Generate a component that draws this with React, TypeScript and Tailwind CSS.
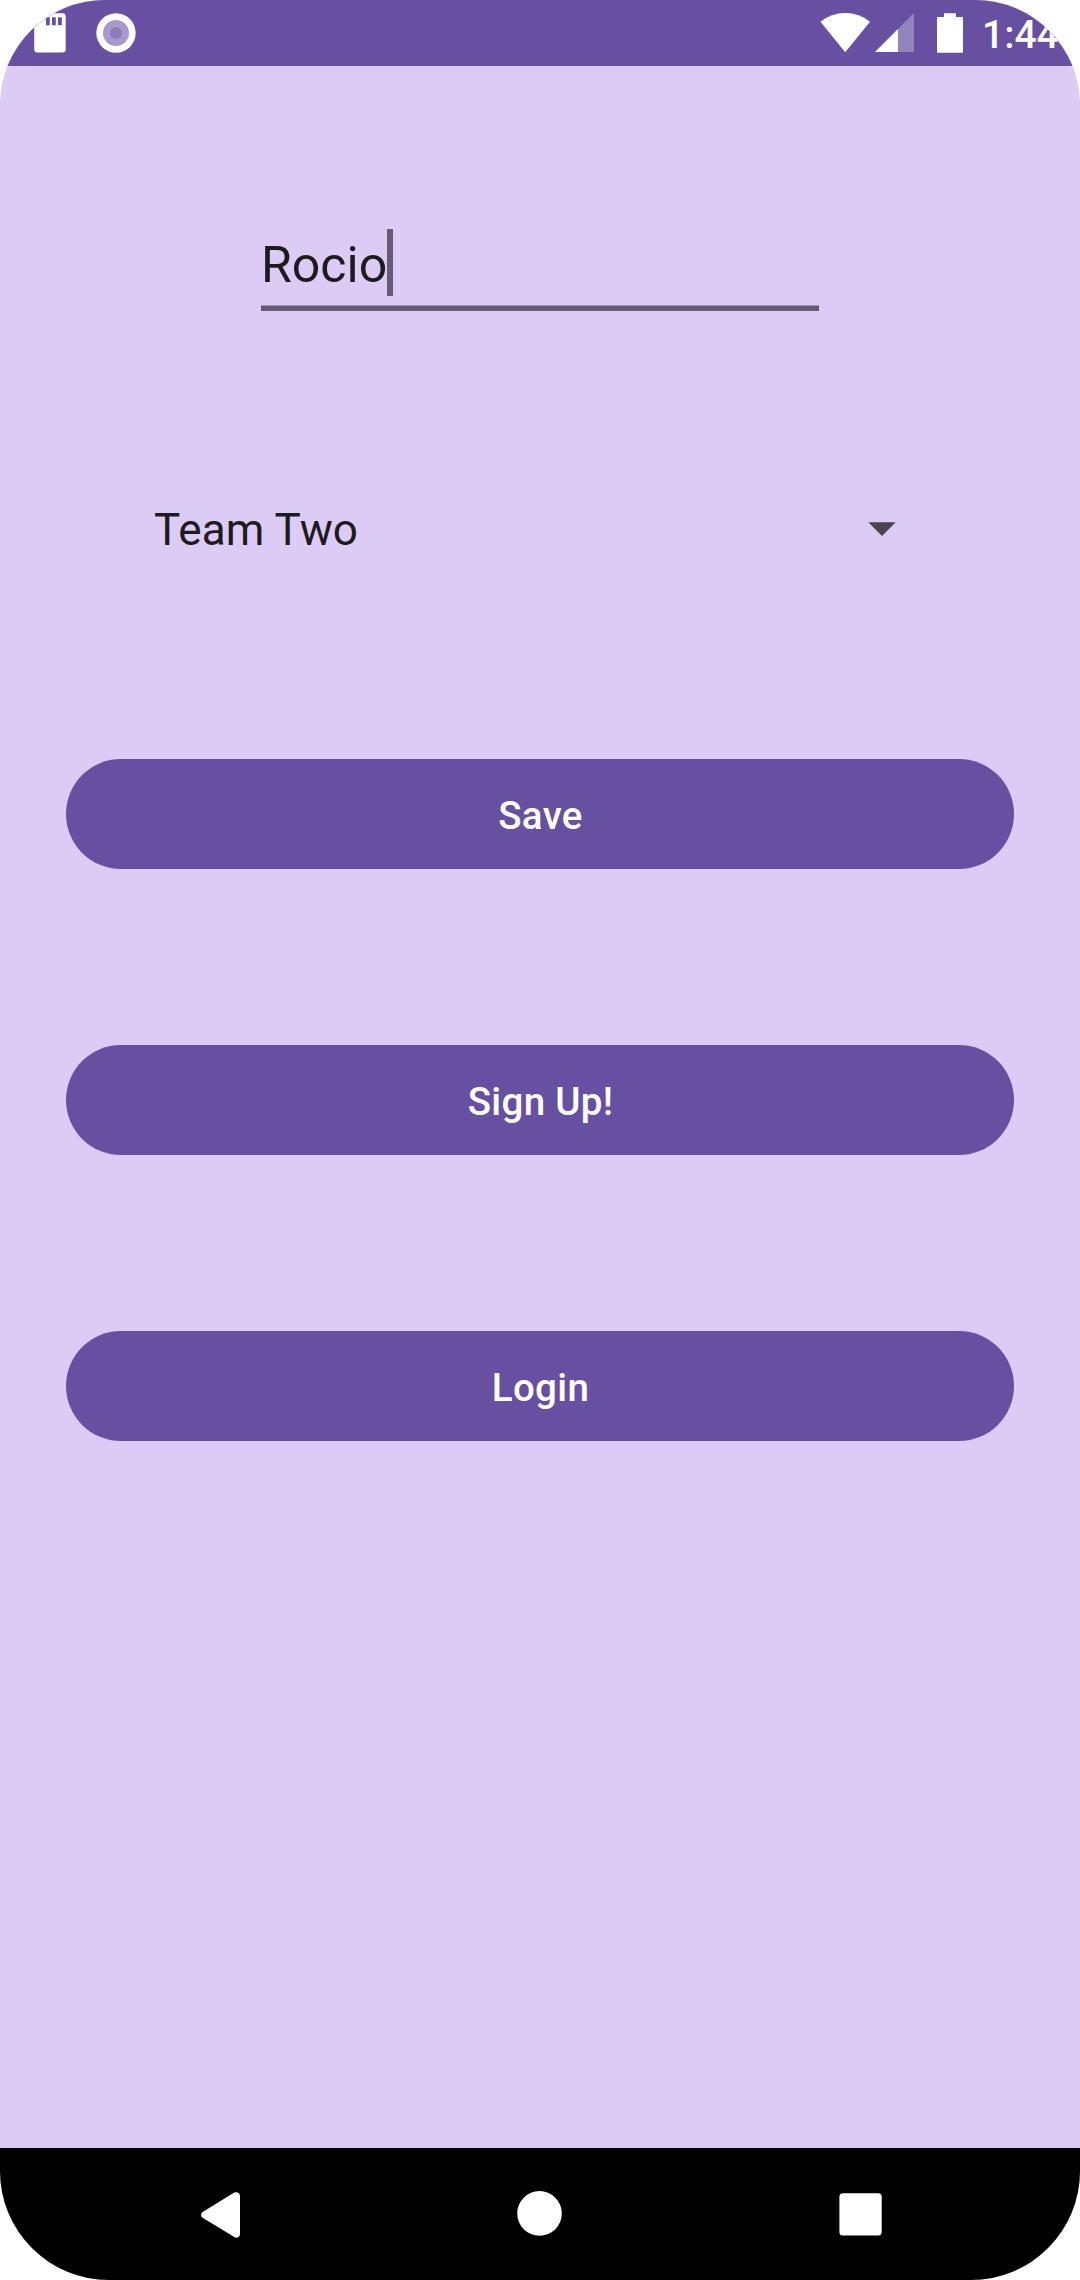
import React from "react";

function StatusBar() {
  return (
    <header className="flex h-[66px] items-start bg-[#6750a2] text-white">
      <svg className="ml-[34px] mt-[13px] shrink-0" width="32" height="40" viewBox="0 0 32 40">
        <path
          fill="currentColor"
          fillRule="evenodd"
          d="M12 0.3H28.5Q31.7 0.3 31.7 3.6V36.2Q31.7 39.5 28.5 39.5H3.4Q0.2 39.5 0.2 36.2V12ZM12 4.3V12.3H15.8V4.3ZM18 4.3V12.3H21.8V4.3ZM24 4.3V12.3H27.8V4.3Z"
        />
      </svg>
      <svg className="ml-[30px] mt-[13px] shrink-0" width="40" height="40" viewBox="0 0 40 40">
        <circle cx="20" cy="20" r="19.7" fill="#fff" />
        <circle cx="20" cy="20" r="13" fill="#a899cd" />
        <circle cx="20" cy="20" r="6.1" fill="#8f7bbb" />
      </svg>
      <svg className="ml-auto mt-[13px] shrink-0" width="50" height="40" viewBox="0 0 50 40">
        <path fill="currentColor" d="M0.5 8.7Q11.3 0 25.2 0Q39.3 0 50 8.7L25.2 39.3Z" />
      </svg>
      <svg className="ml-[5px] mt-[13px] shrink-0" width="39" height="39" viewBox="0 0 39 39">
        <path fill="#9484be" d="M39 0V39H0Z" />
        <path fill="#fff" d="M23 16V39H0Z" />
      </svg>
      <svg className="ml-[23px] mt-[13px] shrink-0" width="26" height="40" viewBox="0 0 26 40">
        <path fill="currentColor" d="M7 0.2H19V4H26V39.7H0V4H7Z" />
      </svg>
      <span className="ml-[19px] mr-[20px] mt-[13px] w-[78px] whitespace-nowrap text-[39px] font-medium leading-[45px]">
        1:44
      </span>
    </header>
  );
}

function ActionButton({ label }: { label: string }) {
  return (
    <button className="flex h-[110px] w-full items-center justify-center rounded-full bg-[#6750a2] pl-[1px] pt-[4px] text-[38.5px] font-medium leading-[46px] tracking-[0.32px] text-white">
      {label}
    </button>
  );
}

function NavigationBar() {
  return (
    <nav className="flex h-[132px] items-start bg-black pt-[42px]">
      <svg className="ml-[200px] mt-[2px]" width="41" height="46" viewBox="0 0 41 46">
        <path
          fill="#fff"
          d="M3 19.8L34.3 0.6Q36.5 -0.4 38.5 0.9Q40 2 40 4V42Q40 44 38.5 45.1Q36.5 46.2 34.3 45L3 26Q1 24.8 1 22.9Q1 21 3 19.8Z"
        />
      </svg>
      <svg className="ml-[276px]" width="46" height="46" viewBox="0 0 46 46">
        <circle cx="22.5" cy="23.4" r="22.3" fill="#fff" />
      </svg>
      <svg className="ml-[276px] mt-[3px]" width="43" height="43" viewBox="0 0 43 43">
        <rect x="0.4" y="0.2" width="42.3" height="42.4" rx="3.5" fill="#fff" />
      </svg>
    </nav>
  );
}

export default function App() {
  return (
    <div className="h-[2280px] w-[1080px] bg-white font-['Roboto',sans-serif]">
      <div className="flex h-full flex-col overflow-hidden rounded-t-[105px] rounded-b-[109px] bg-[#dbcbf5]">
        <StatusBar />
        <main className="flex flex-1 flex-col items-center px-[66px] text-[#1d1b20]">
          <div className="mt-[163px] flex h-[82px] w-[558px] items-start border-b-[5px] border-[#655b73] shadow-[inset_0_-1px_0_#a093b4]">
            <span className="mt-[7px] w-[126px] whitespace-nowrap text-[50px] leading-[58px]">Rocio</span>
            <span className="h-[67px] w-[6px] bg-[#655b73]" />
          </div>
          <div className="mt-[188px] flex h-[62px] w-[770px] items-center justify-between pr-[29px]">
            <span className="-ml-px text-[44px] leading-[52px] tracking-[0.1px]">Team Two</span>
            <svg className="-mt-[2px]" width="28" height="14" viewBox="0 0 28 14">
              <path fill="#49454f" d="M0.3 0.3H27.7L14 14Z" />
            </svg>
          </div>
          <div className="mt-[198px] flex w-full flex-col gap-[176px]">
            <ActionButton label="Save" />
            <ActionButton label="Sign Up!" />
            <ActionButton label="Login" />
          </div>
        </main>
        <NavigationBar />
      </div>
    </div>
  );
}
